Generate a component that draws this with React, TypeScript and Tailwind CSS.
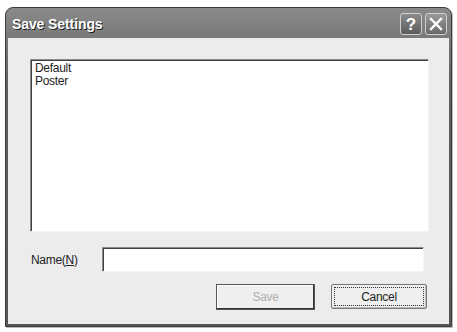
import React from "react";

const App = () => {
  return (
    <div className="w-[457px] h-[332px] bg-white pt-[7px] pl-[5px] font-['Liberation_Sans',Arial,sans-serif]">
      <div className="w-[447px] h-[320px] rounded-t-[8px] bg-gradient-to-b from-[#8a8a8a] from-0% via-[#5f5f5f] via-25% to-[#555] flex flex-col border border-[#3c3c3c] shadow-[1px_1px_0_#bbb]">
        {/* Title bar */}
        <div className="h-[30px] flex items-center justify-between pl-[6px] pr-[4px] shrink-0">
          <span className="text-white font-bold text-[14px] tracking-[-0.1px] pt-[2px] [text-shadow:1px_1px_0_#222]">
            Save Settings
          </span>
          <div className="flex gap-[3px] pt-[2px]">
            <button className="w-[22px] h-[22px] rounded-[3px] border border-[#d0d0d0] bg-gradient-to-b from-[#8c8c8c] to-[#5c5c5c] flex items-center justify-center text-white font-bold text-[17px] leading-none">
              ?
            </button>
            <button className="w-[22px] h-[22px] rounded-[3px] border border-[#d0d0d0] bg-gradient-to-b from-[#9a9a9a] to-[#6a6a6a] flex items-center justify-center">
              <svg width="14" height="14" viewBox="0 0 14 14">
                <path d="M2 2 L12 12 M12 2 L2 12" stroke="white" strokeWidth="2.4" strokeLinecap="square" />
              </svg>
            </button>
          </div>
        </div>

        {/* Body */}
        <div className="flex-1 mx-[2px] mb-[2px] bg-[#ececec] pt-[21px] pl-[22px] pr-[20px] flex flex-col text-[12px] tracking-[-0.3px] text-black">
          <div className="h-[173px] bg-white border border-t-[#8a8a8a] border-l-[#8a8a8a] border-r-[#f4f4f4] border-b-[#f4f4f4] shadow-[inset_1px_1px_0_#404040] pl-[4px] pt-[2px] leading-[13px] text-[#222]">
            <div>Default</div>
            <div>Poster</div>
          </div>

          <div className="flex items-center mt-[15px]">
            <span className="w-[72px] pl-[1px] text-[#222]">
              Name(<span className="underline">N</span>)
            </span>
            <input
              className="w-[322px] h-[25px] bg-white border border-t-[#8a8a8a] border-l-[#8a8a8a] border-r-[#f4f4f4] border-b-[#f4f4f4] shadow-[inset_1px_1px_0_#404040] outline-none"
            />
          </div>

          <div className="flex justify-end gap-[16px] mt-[12px] pr-[2px]">
            <button
              disabled
              className="w-[99px] h-[26px] bg-[#efefef] border border-[#555] shadow-[inset_-1px_-1px_0_#333,inset_1px_1px_0_#fff] text-[#b0b0b0] text-[12px]"
            >
              Save
            </button>
            <button className="w-[96px] h-[25px] bg-[#efefef] border border-[#777] rounded-[2px] shadow-[inset_-1px_-1px_0_#bbb] text-[12px] text-[#222] p-[2px]">
              <span className="flex w-full h-full items-center justify-center border border-dotted border-[#333]">
                Cancel
              </span>
            </button>
          </div>
        </div>
      </div>
    </div>
  );
};

export default App;
